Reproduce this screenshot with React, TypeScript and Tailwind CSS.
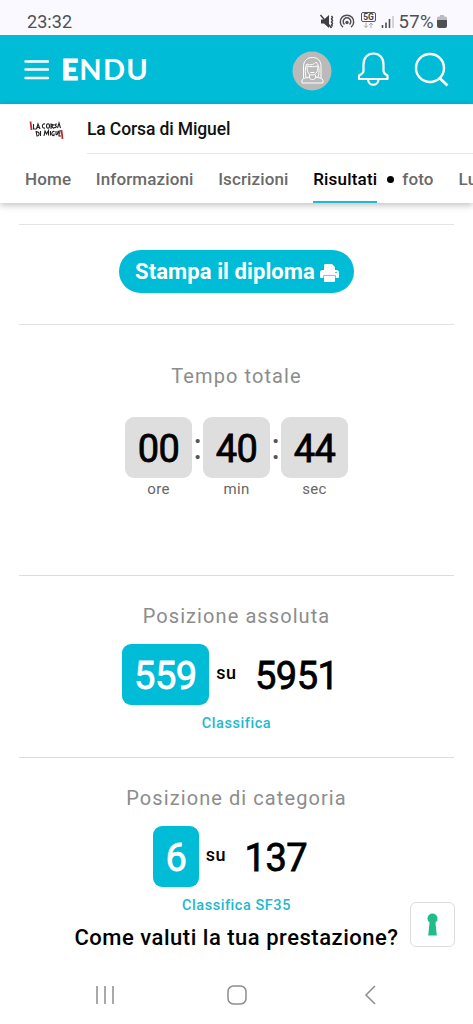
import type { ReactNode } from "react";

const tabs = ["Home", "Informazioni", "Iscrizioni"];

function StatusBar() {
  return (
    <div className="flex h-[35px] shrink-0 items-center bg-[#f9f9ff] pr-[26px] pl-[27px] pt-[9px] text-[#505054]">
      <span className="text-[18px] leading-[26px] tracking-[0.05px]">23:32</span>
      <svg className="ml-auto" width="82" height="24" viewBox="0 0 82 24" fill="none">
        <path d="M2 9.500h3l5-4.500v13l-5-4.500H2z" fill="#3f3f43" />
        <path d="M1.500 5l11 13M12.500 6l1 1.500-1 1.500 1 1.500-1 1.500 1 1.500-1 1.500 1 1.500" stroke="#3f3f43" strokeWidth="1.400" />
        <path d="M24 17.200a6.700 6.700 0 1 1 8 0M25.500 14.500a3.800 3.800 0 1 1 5 0" stroke="#505054" strokeWidth="1.500" />
        <circle cx="28" cy="12.500" r="1.700" fill="#505054" />
        <rect x="42.500" y="2.500" width="14" height="9" rx="1.500" stroke="#555" />
        <text x="49.500" y="9.900" textAnchor="middle" fontSize="8.500" fontWeight="700" fill="#444">5G</text>
        <path d="M47 12.500v5m-2-2 2 2 2-2M52 18v-5m-2 2 2-2 2 2" stroke="#aaa" />
        <path d="M63.500 15v3M67 12.500V18M70.500 9v9" stroke="#505054" strokeWidth="1.600" />
        <path d="M74 6v12" stroke="#ccc" strokeWidth="1.600" />
      </svg>
      <span className="-ml-[3px] text-[18.500px] leading-[26px] tracking-[0.400px]">57%</span>
      <svg className="ml-[3px]" width="10" height="24" viewBox="0 0 10 24">
        <path d="M3 5h4v1.500h1.500a1.500 1.500 0 0 1 1.500 1.500v2H0V8a1.500 1.500 0 0 1 1.500-1.500H3z" fill="#bcbcbe" />
        <path d="M0 10h10v6a2 2 0 0 1-2 2H2a2 2 0 0 1-2-2z" fill="#505054" />
      </svg>
    </div>
  );
}

function AppBar() {
  return (
    <header className="flex h-[69px] shrink-0 items-center bg-[#00bcd6] pl-[24px] pr-[24px] text-white">
      <svg width="26" height="20" viewBox="0 0 26 20" stroke="white" strokeWidth="2.400" strokeLinecap="round">
        <path d="M1.500 1.500h22.500M1.500 9.500h22.500M1.500 18h22.500" />
      </svg>
      <span className="-mt-[2px] ml-[11.500px] font-[Lato] text-[29px] leading-[35px] font-bold tracking-[1.200px]">
        <span className="font-black [-webkit-text-stroke:1px_white]">E</span>NDU
      </span>
      <svg className="mt-[3px] ml-auto" width="40" height="40" viewBox="0 0 40 40" fill="none" stroke="white">
        <circle cx="20" cy="20" r="19.500" fill="#bababa" stroke="none" />
        <path d="M11.500 27V15.500C11.500 10 15 6.500 20.500 6.500S29 10 29 15.500V27M14 26c-1-5-1-11 1-13 3 2 8 0 9-2 3 3 4 9 2 15" />
        <path d="M15 15c0 7 2 9 5 9s6-2 6-9c-3 1-8 1-11 0zM18.500 21.500h4M17.500 24v3c1 2 5 2 6 0v-3M10 32v-3c1-2 4-2 7.500-3M31 32v-3c-1-2-4-2-7.500-3M10 32h21" />
      </svg>
      <svg className="mt-[1px] ml-[25px]" width="32" height="36" viewBox="0 0 32 36" fill="none" stroke="white" strokeWidth="2.200">
        <path d="M6.500 19V12.500C6.500 6 10.500 1.500 16.500 1.500S26.500 6 26.500 12.500V19c0 2 1 3 4 4.500V27H2v-3.500c3-1.500 4.500-2.500 4.500-4.500z" strokeLinejoin="round" />
        <path d="M11 27.500c.5 7 10 7 10.500 0" />
      </svg>
      <svg className="ml-[25px]" width="35" height="36" viewBox="0 0 35 36" fill="none" stroke="white" strokeWidth="2.400">
        <circle cx="16" cy="16" r="14" />
        <path d="m25.500 26 8 7.500" strokeWidth="2.800" />
      </svg>
    </header>
  );
}

function EventNav() {
  return (
    <nav className="relative h-[99px] shrink-0 bg-white shadow-[0_2px_7px_rgba(0,0,0,0.26)]">
      <div className="flex h-[50px]">
        <svg className="mt-[15px] ml-[28px] shrink-0" width="36" height="22" viewBox="0 0 36 22" fill="none">
          <path d="m2.500 2.500 1 8.500M33.500 11l1 9" stroke="#cf2633" strokeWidth="1.800" />
          <g stroke="#222" strokeWidth="1.100">
            <path d="M5.500 5v5h3M8.500 10l1.500-5 2 5M9.500 8.500h2M17 5c-3.500-1-3.500 5 0 4M18.500 7c0-3 3-3 3 0s-3 3-3 0M23 10V5l2.500 1-2 1.500 2.500 2M29 5c-3 0-2 1.500-1 2s0 2-2 1.500M29.500 9l1.500-5 1.500 5" />
            <path d="m8 12 1 5c3 0 3-5-1-4M12.500 12v5M16 17l1-5 1.500 3 2-3.500v5M22.500 12v4.500M26.500 12.500c-3.500-1-3.500 5-.500 4v-2M28 12v3c.500 2 2 0 2-3M33 12h-2v5h2M31 14h1.500" />
          </g>
        </svg>
        <div className="ml-[23px] flex-1 border-b-[1.500px] border-[#e8e8e8] text-[17.500px] leading-[50px] font-medium tracking-[-0.120px] text-[#111]">
          La Corsa di Miguel
        </div>
      </div>
      <div className="flex h-[49px] overflow-hidden pl-[25px] text-[17px] leading-[51px] font-medium tracking-[0.120px] whitespace-nowrap text-[#6a6a6a]">
        {tabs.map((tab) => (
          <span key={tab} className="mr-[24.700px]">{tab}</span>
        ))}
        <span className="border-b-2 border-[#20b9d0] tracking-[0.200px] text-black">Risultati</span>
        <span className="mt-[22px] ml-[10px] size-[7px] shrink-0 rounded-full bg-black" />
        <span className="ml-[8px]">foto</span>
        <span className="ml-[25px]">Luoghi</span>
      </div>
    </nav>
  );
}

function TimeUnit({ value, label }: { value: string; label: string }) {
  return (
    <div className="w-[67px] text-center">
      <div className="h-[61px] rounded-[9px] bg-[#dedede] text-[38px] leading-[64px] tracking-[-0.500px] text-black [-webkit-text-stroke:0.800px_black]">{value}</div>
      <div className="text-[15px] leading-[22px] tracking-[0.300px] text-[#666]">{label}</div>
    </div>
  );
}

function Colon() {
  return <span className="w-[11px] text-center text-[36px] leading-[60px] text-[#555]">:</span>;
}

function Heading({ children }: { children: ReactNode }) {
  return <h2 className="text-center text-[20px] leading-[24px] tracking-[1.080px] text-[#8c8c8c]">{children}</h2>;
}

function Ranking({ title, rank, total, link }: { title: string; rank: string; total: string; link: string }) {
  return (
    <section className="mx-[19px] h-[182px] shrink-0 border-t border-[#ddd] pt-[28px]">
      <Heading>{title}</Heading>
      <div className="mt-[16px] flex h-[61px] justify-center pr-[13px] text-black">
        <span className="rounded-[9px] bg-[#00bcd6] px-[12.500px] text-[38px] leading-[64px] tracking-[-0.500px] text-white [-webkit-text-stroke:0.800px_white]">{rank}</span>
        <span className="ml-[7px] text-[18px] leading-[58px] font-medium tracking-[0.500px]">su</span>
        <span className="ml-[18.500px] text-[38px] leading-[64px] tracking-[-0.500px] [-webkit-text-stroke:0.800px_black]">{total}</span>
      </div>
      <div className="mt-[8px] text-center text-[14.500px] leading-[22px] font-medium tracking-[0.550px] text-[#1eb8cf]">{link}</div>
    </section>
  );
}

export default function App() {
  return (
    <div className="flex h-[1024px] w-[473px] flex-col overflow-hidden bg-white font-[Roboto,sans-serif]">
      <StatusBar />
      <AppBar />
      <EventNav />
      <section className="mx-[19px] mt-[21px] flex h-[100px] shrink-0 items-start justify-center border-t border-[#e4e4e4] pt-[25px]">
        <button className="flex h-[43px] w-[235px] items-center rounded-full bg-[#00bcd6] pl-[16px] text-[22px] font-bold tracking-[0.100px] whitespace-nowrap text-white">
          Stampa il diploma
          <svg className="mt-[3px] ml-[5px] shrink-0" width="19" height="19" viewBox="0 0 19 19" fill="white">
            <path d="M4 6V1.500C4 .7 4.700 0 5.500 0H12l3 3v3h1.500A2.500 2.500 0 0 1 19 8.500V13a1 1 0 0 1-1 1H1a1 1 0 0 1-1-1V8.500A2.500 2.500 0 0 1 2.500 6z" />
            <path d="M4 12h11v5a1 1 0 0 1-1 1H5a1 1 0 0 1-1-1z" />
            <path d="M3.500 11.500h12M3.500 11.500v3M15.500 11.500v3" stroke="#00bcd6" strokeWidth=".6" />
            <circle cx="16" cy="8.500" r=".8" fill="#00bcd6" />
          </svg>
        </button>
      </section>
      <section className="mx-[19px] h-[251px] shrink-0 border-t border-[#e1e1e1] pt-[39px]">
        <Heading>Tempo totale</Heading>
        <div className="mt-[29px] flex justify-center">
          <TimeUnit value="00" label="ore" />
          <Colon />
          <TimeUnit value="40" label="min" />
          <Colon />
          <TimeUnit value="44" label="sec" />
        </div>
      </section>
      <Ranking title="Posizione assoluta" rank="559" total="5951" link="Classifica" />
      <div className="relative">
        <Ranking title="Posizione di categoria" rank="6" total="137" link="Classifica SF35" />
        <button aria-label="Accesso" className="absolute top-[145px] right-[18px] flex size-[45px] items-center justify-center rounded-[6px] border-[1.500px] border-[#ddd] bg-white">
          <svg width="12" height="24" viewBox="0 0 12 24" fill="#20bd8b">
            <circle cx="5.500" cy="5.500" r="5" />
            <path d="M2.700 8h5.600l1.500 14.500H1.200z" />
          </svg>
        </button>
      </div>
      <h3 className="-mt-[15px] text-center text-[22px] leading-[28px] font-medium tracking-[0.520px] whitespace-nowrap text-black">
        Come valuti la tua prestazione?
      </h3>
      <div className="mt-[31px] flex px-[95px]">
        <svg width="282" height="24" viewBox="0 0 282 24" fill="none" stroke="#8d8d8d" strokeWidth="1.500" className="shrink-0">
          <path d="M2 3v18M10 3v18M18 3v18M280 3l-9 9 9 9" />
          <rect x="133" y="3" width="18" height="18" rx="5.500" />
        </svg>
      </div>
    </div>
  );
}
